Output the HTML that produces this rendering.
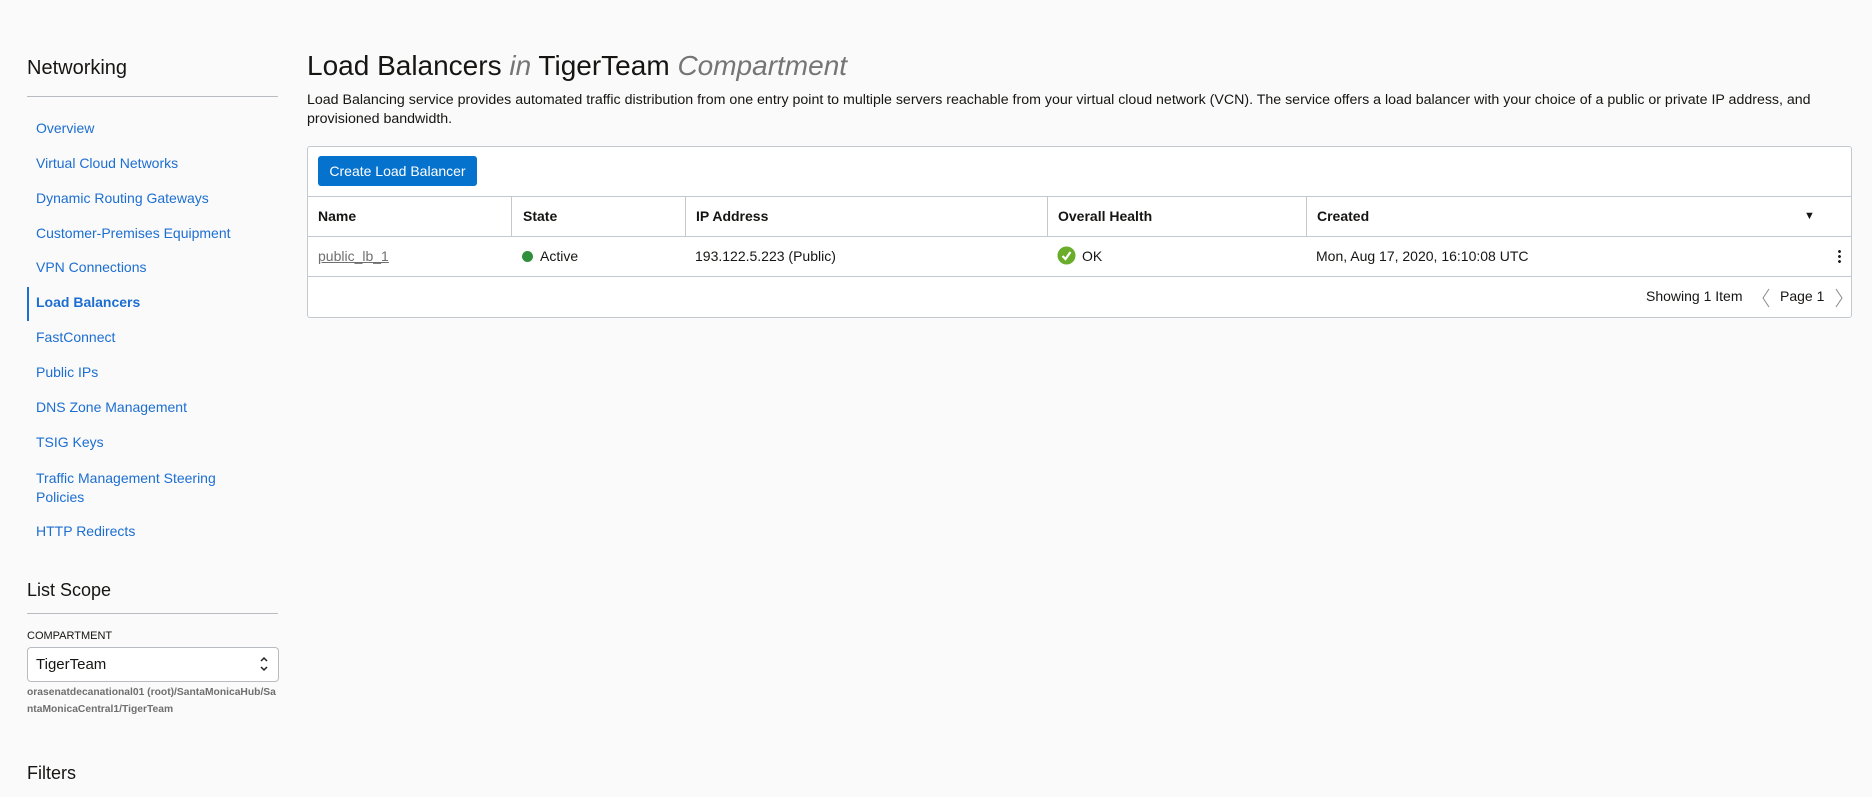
<!DOCTYPE html>
<html><head><meta charset="utf-8"><style>
*{box-sizing:border-box;margin:0;padding:0}
body{width:1872px;height:797px;background:#fafafa;font-family:"Liberation Sans",Arial,sans-serif;color:#161513;position:relative;overflow:hidden}
.a{position:absolute;white-space:nowrap}
.nav{position:absolute;left:36px;font-size:14px;color:#1c6ed1}
.hr{position:absolute;left:27px;width:251px;height:1px;background:#b8bcc2}
.th{position:absolute;top:196px;height:40px;line-height:40px;font-size:14px;font-weight:bold}
.td{position:absolute;top:236px;height:40px;line-height:40px;font-size:14px}
.vl{position:absolute;top:196px;height:40px;width:1px;background:#c4c9cf}
</style></head><body>
<div class="a" style="left:27px;top:57px;font-size:20px">Networking</div>
<div class="hr" style="top:96px"></div>
<div class="nav" style="top:120px">Overview</div>
<div class="nav" style="top:155px">Virtual Cloud Networks</div>
<div class="nav" style="top:190px">Dynamic Routing Gateways</div>
<div class="nav" style="top:225px">Customer-Premises Equipment</div>
<div class="nav" style="top:259px">VPN Connections</div>
<div style="position:absolute;left:27px;top:287px;width:2px;height:34px;background:#1c6ed1"></div>
<div class="nav" style="top:294px;font-weight:bold">Load Balancers</div>
<div class="nav" style="top:329px">FastConnect</div>
<div class="nav" style="top:364px">Public IPs</div>
<div class="nav" style="top:399px">DNS Zone Management</div>
<div class="nav" style="top:434px">TSIG Keys</div>
<div class="nav" style="top:469px;line-height:19px">Traffic Management Steering<br>Policies</div>
<div class="nav" style="top:523px">HTTP Redirects</div>
<div class="a" style="left:27px;top:580px;font-size:18px">List Scope</div>
<div class="hr" style="top:613px"></div>
<div class="a" style="left:27px;top:630px;font-size:11px">COMPARTMENT</div>
<div style="position:absolute;left:27px;top:647px;width:252px;height:35px;border:1px solid #b8bcc2;border-radius:4px;background:#fff"></div>
<div class="a" style="left:36px;top:656px;font-size:15px">TigerTeam</div>
<svg style="position:absolute;left:259px;top:655px" width="10" height="18"><path d="M2 6l3-3 3 3M2 12l3 3 3-3" stroke="#222" stroke-width="1.5" fill="none"/></svg>
<div class="a" style="left:27px;top:684px;font-size:10.3px;line-height:17px;color:#6f6f6f;font-weight:bold">orasenatdecanational01 (root)/SantaMonicaHub/Sa<br>ntaMonicaCentral1/TigerTeam</div>
<div class="a" style="left:27px;top:763px;font-size:18px">Filters</div>

<div class="a" style="left:307px;top:50px;font-size:28px">Load Balancers <i style="color:#757575">in</i> TigerTeam <i style="color:#757575">Compartment</i></div>
<div class="a" style="left:307px;top:91px;font-size:14.2px;line-height:19px;width:1535px;white-space:normal">Load Balancing service provides automated traffic distribution from one entry point to multiple servers reachable from your virtual cloud network (VCN). The service offers a load balancer with your choice of a public or private IP address, and provisioned bandwidth.</div>

<div style="position:absolute;left:307px;top:146px;width:1545px;height:172px;border:1px solid #c4c9cf;border-radius:3px;background:#fff"></div>
<div class="a" style="left:318px;top:156px;width:159px;height:30px;background:#0572ce;border-radius:3px;color:#fff;font-size:14px;line-height:30px;text-align:center">Create Load Balancer</div>
<div style="position:absolute;left:308px;top:196px;width:1543px;height:1px;background:#c4c9cf"></div>
<div style="position:absolute;left:308px;top:236px;width:1543px;height:1px;background:#c4c9cf"></div>
<div style="position:absolute;left:308px;top:276px;width:1543px;height:1px;background:#c4c9cf"></div>
<div class="vl" style="left:511px"></div><div class="vl" style="left:685px"></div><div class="vl" style="left:1047px"></div><div class="vl" style="left:1306px"></div>
<div class="th" style="left:318px">Name</div>
<div class="th" style="left:523px">State</div>
<div class="th" style="left:696px">IP Address</div>
<div class="th" style="left:1058px">Overall Health</div>
<div class="th" style="left:1317px">Created</div>
<div class="a" style="left:1804px;top:210px;font-size:11px">&#9660;</div>
<div class="td" style="left:318px;color:#6f6f6f;text-decoration:underline">public_lb_1</div>
<div style="position:absolute;left:522px;top:251px;width:11px;height:11px;border-radius:50%;background:#2f8f3b"></div>
<div class="td" style="left:540px">Active</div>
<div class="td" style="left:695px">193.122.5.223 (Public)</div>
<svg style="position:absolute;left:1057px;top:246px" width="19" height="19" viewBox="0 0 19 19"><circle cx="9.5" cy="9.5" r="9" fill="#6aad2b"/><path d="M5.5 10l3 3 5-7" stroke="#fff" stroke-width="2.2" fill="none"/></svg>
<div class="td" style="left:1082px">OK</div>
<div class="td" style="left:1316px">Mon, Aug 17, 2020, 16:10:08 UTC</div>
<div style="position:absolute;left:1838px;top:249px;width:3px;height:15px;background:radial-gradient(circle,#222 1.4px,transparent 1.5px) 0 0/3px 5px"></div>
<div class="a" style="left:1646px;top:288px;font-size:14px">Showing 1 Item</div>
<svg style="position:absolute;left:1761px;top:288px" width="10" height="20"><path d="M8 1L2 10l6 9" stroke="#888" fill="none"/></svg>
<div class="a" style="left:1780px;top:288px;font-size:14px">Page 1</div>
<svg style="position:absolute;left:1834px;top:288px" width="10" height="20"><path d="M2 1l6 9-6 9" stroke="#888" fill="none"/></svg>
</body></html>
